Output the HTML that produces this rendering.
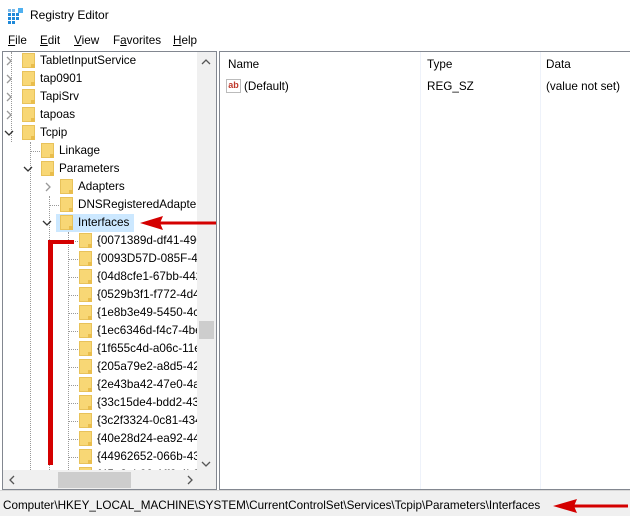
<!DOCTYPE html>
<html><head><style>
*{margin:0;padding:0;box-sizing:border-box}
body{width:630px;height:516px;background:#fff;font-family:"Liberation Sans",sans-serif;font-size:11.7px;color:#000;position:relative;overflow:hidden}
.a{position:absolute}
.row{position:absolute;height:18px;line-height:18px;white-space:nowrap}
.fd{position:absolute;width:13px;height:15px;background:#f8d775;border:1px solid #e8c25a;top:1px}
.fd:after{content:"";position:absolute;right:-1px;bottom:-1px;width:4px;height:4px;background:#e9bd4c}
.tx{position:absolute;top:0}
.cv{position:absolute;top:4px}
.dh{position:absolute;border-top:1px dotted #999;width:8px;top:9px}
.dv{position:absolute;border-left:1px dotted #999}
</style></head><body>
<div class="a" style="left:8px;top:8px;width:16px;height:16px">
<svg width="16" height="16"><g fill="#1e88d8"><rect x="0" y="5" width="3" height="3"/><rect x="4" y="5" width="3" height="3"/><rect x="8" y="5" width="3" height="3"/><rect x="0" y="9" width="3" height="3"/><rect x="4" y="9" width="3" height="3"/><rect x="8" y="9" width="3" height="3"/><rect x="0" y="13" width="3" height="3"/><rect x="4" y="13" width="3" height="3"/><rect x="0" y="1" width="3" height="3" opacity=".6"/><rect x="4" y="1" width="3" height="3" opacity=".6"/><rect x="10" y="0" width="5" height="5" fill="#4fb0f0"/></g></svg></div>
<div class="a" style="left:30px;top:8px;font-size:12px">Registry Editor</div>
<div class="a" style="left:8px;top:34px"><u>F</u>ile</div>
<div class="a" style="left:40px;top:34px"><u>E</u>dit</div>
<div class="a" style="left:74px;top:34px"><u>V</u>iew</div>
<div class="a" style="left:113px;top:34px">F<u>a</u>vorites</div>
<div class="a" style="left:173px;top:34px"><u>H</u>elp</div>
<div class="a" style="left:2px;top:51px;width:215px;height:439px;border:1px solid #828790;overflow:hidden">
<div class="dv" style="left:8px;top:0;height:90px"></div>
<div class="dv" style="left:27px;top:90px;height:346px"></div>
<div class="dv" style="left:46px;top:144px;height:292px"></div>
<div class="dv" style="left:65px;top:180px;height:256px"></div>
</div>
<div id="tree" class="a" style="left:2px;top:52px;width:195px;height:418px;overflow:hidden">
<div class="row" style="top:0"><svg class="cv" style="left:3px" width="8" height="10"><path d="M2 1 L6 5 L2 9" fill="none" stroke="#999" stroke-width="1.3"/></svg><div class="fd" style="left:20px"></div><span class="tx" style="left:38px">TabletInputService</span></div>
<div class="row" style="top:18px"><svg class="cv" style="left:3px" width="8" height="10"><path d="M2 1 L6 5 L2 9" fill="none" stroke="#999" stroke-width="1.3"/></svg><div class="fd" style="left:20px"></div><span class="tx" style="left:38px">tap0901</span></div>
<div class="row" style="top:36px"><svg class="cv" style="left:3px" width="8" height="10"><path d="M2 1 L6 5 L2 9" fill="none" stroke="#999" stroke-width="1.3"/></svg><div class="fd" style="left:20px"></div><span class="tx" style="left:38px">TapiSrv</span></div>
<div class="row" style="top:54px"><svg class="cv" style="left:3px" width="8" height="10"><path d="M2 1 L6 5 L2 9" fill="none" stroke="#999" stroke-width="1.3"/></svg><div class="fd" style="left:20px"></div><span class="tx" style="left:38px">tapoas</span></div>
<div class="row" style="top:72px"><svg class="cv" style="left:2px;top:5px" width="10" height="8"><path d="M1 2 L5 6 L9 2" fill="none" stroke="#333" stroke-width="1.3"/></svg><div class="fd" style="left:20px"></div><span class="tx" style="left:38px">Tcpip</span></div>
<div class="row" style="top:90px"><div class="dh" style="left:28px;width:10px"></div><div class="fd" style="left:39px"></div><span class="tx" style="left:57px">Linkage</span></div>
<div class="row" style="top:108px"><svg class="cv" style="left:21px;top:5px" width="10" height="8"><path d="M1 2 L5 6 L9 2" fill="none" stroke="#333" stroke-width="1.3"/></svg><div class="fd" style="left:39px"></div><span class="tx" style="left:57px">Parameters</span></div>
<div class="row" style="top:126px"><svg class="cv" style="left:42px" width="8" height="10"><path d="M2 1 L6 5 L2 9" fill="none" stroke="#999" stroke-width="1.3"/></svg><div class="fd" style="left:58px"></div><span class="tx" style="left:76px">Adapters</span></div>
<div class="row" style="top:144px"><div class="dh" style="left:47px;width:10px"></div><div class="fd" style="left:58px"></div><span class="tx" style="left:76px">DNSRegisteredAdapters</span></div>
<div class="row" style="top:162px"><svg class="cv" style="left:40px;top:5px" width="10" height="8"><path d="M1 2 L5 6 L9 2" fill="none" stroke="#333" stroke-width="1.3"/></svg><div class="a" style="left:54px;top:0;width:78px;height:18px;background:#cce8ff"></div><div class="fd" style="left:58px"></div><span class="tx" style="left:76px">Interfaces</span></div>
<div id="ifs"></div>
</div>
<script>
var n=["{0071389d-df41-490","{0093D57D-085F-4F","{04d8cfe1-67bb-442","{0529b3f1-f772-4d4","{1e8b3e49-5450-4ca","{1ec6346d-f4c7-4be","{1f655c4d-a06c-11e","{205a79e2-a8d5-428","{2e43ba42-47e0-4a3","{33c15de4-bdd2-43","{3c2f3324-0c81-434","{40e28d24-ea92-449","{44962652-066b-43f","{45a3eb00-1ff6-4b0"];
var h="";for(var i=0;i<n.length;i++){var t=180+i*18;h+='<div class="row" style="top:'+t+'px"><div class="dh" style="left:66px;width:10px"></div><div class="fd" style="left:77px"></div><span class="tx" style="left:95px">'+n[i]+'</span></div>';}
document.getElementById("ifs").outerHTML=h;
</script>
<div class="a" style="left:197px;top:52px;width:19px;height:420px;background:#f0f0f0"></div>
<svg class="a" style="left:201px;top:58px" width="10" height="8"><path d="M1 6 L5 2 L9 6" fill="none" stroke="#555" stroke-width="1.3"/></svg>
<div class="a" style="left:199px;top:321px;width:15px;height:18px;background:#cdcdcd"></div>
<svg class="a" style="left:201px;top:460px" width="10" height="8"><path d="M1 2 L5 6 L9 2" fill="none" stroke="#555" stroke-width="1.3"/></svg>
<div class="a" style="left:3px;top:470px;width:213px;height:19px;background:#f0f0f0"></div>
<svg class="a" style="left:8px;top:475px" width="8" height="10"><path d="M6 1 L2 5 L6 9" fill="none" stroke="#555" stroke-width="1.3"/></svg>
<div class="a" style="left:58px;top:472px;width:73px;height:16px;background:#cdcdcd"></div>
<svg class="a" style="left:186px;top:475px" width="8" height="10"><path d="M2 1 L6 5 L2 9" fill="none" stroke="#555" stroke-width="1.3"/></svg>
<div class="a" style="left:219px;top:51px;width:412px;height:439px;border:1px solid #828790"></div>
<div class="a" style="left:420px;top:52px;width:1px;height:437px;background:#eef2fa"></div>
<div class="a" style="left:540px;top:52px;width:1px;height:437px;background:#eef2fa"></div>
<div class="a" style="left:228px;top:58px">Name</div>
<div class="a" style="left:427px;top:58px">Type</div>
<div class="a" style="left:546px;top:58px">Data</div>
<div class="a" style="left:226px;top:79px;width:15px;height:14px;border:1px solid #bbb;background:#fff;font-size:9px;font-weight:bold;color:#c0392b;line-height:10px;text-align:center">ab</div>
<div class="a" style="left:244px;top:80px">(Default)</div>
<div class="a" style="left:427px;top:80px">REG_SZ</div>
<div class="a" style="left:546px;top:80px">(value not set)</div>
<div class="a" style="left:0;top:490px;width:630px;height:26px;background:#f0f0f0;border-top:1px solid #d7d7d7"></div>
<div class="a" style="left:3px;top:499px;font-size:11.7px">Computer\HKEY_LOCAL_MACHINE\SYSTEM\CurrentControlSet\Services\Tcpip\Parameters\Interfaces</div>
<svg class="a" style="left:0;top:0" width="630" height="516">
<g fill="#d40000" stroke="#d40000">
<line x1="216" y1="223" x2="150" y2="223" stroke-width="3"/>
<polygon points="140,223 163,216 160,223 163,230" stroke="none"/>
<line x1="628" y1="506" x2="565" y2="506" stroke-width="3"/>
<polygon points="553,506 577,499 574,506 577,513" stroke="none"/>
<rect x="48" y="240" width="26" height="4" stroke="none"/>
<rect x="48" y="240" width="5" height="225" stroke="none"/>
</g></svg>
</body></html>
